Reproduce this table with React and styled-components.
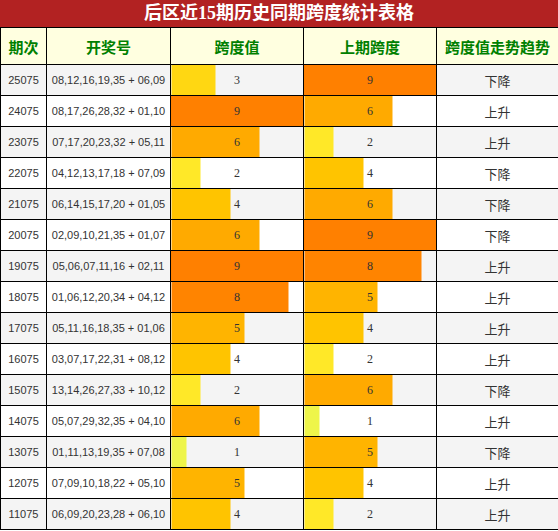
import styled, { createGlobalStyle } from "styled-components";

const GlobalStyle = createGlobalStyle`
  body {
    margin: 0;
    background: #fff;
  }
`;

const rows = [
  ["25075", "08,12,16,19,35 + 06,09", 3, 9, "下降"],
  ["24075", "08,17,26,28,32 + 01,10", 9, 6, "上升"],
  ["23075", "07,17,20,23,32 + 05,11", 6, 2, "上升"],
  ["22075", "04,12,13,17,18 + 07,09", 2, 4, "下降"],
  ["21075", "06,14,15,17,20 + 01,05", 4, 6, "下降"],
  ["20075", "02,09,10,21,35 + 01,07", 6, 9, "下降"],
  ["19075", "05,06,07,11,16 + 02,11", 9, 8, "上升"],
  ["18075", "01,06,12,20,34 + 04,12", 8, 5, "上升"],
  ["17075", "05,11,16,18,35 + 01,06", 5, 4, "上升"],
  ["16075", "03,07,17,22,31 + 08,12", 4, 2, "上升"],
  ["15075", "13,14,26,27,33 + 10,12", 2, 6, "下降"],
  ["14075", "05,07,29,32,35 + 04,10", 6, 1, "上升"],
  ["13075", "01,11,13,19,35 + 07,08", 1, 5, "下降"],
  ["12075", "07,09,10,18,22 + 05,10", 5, 4, "上升"],
  ["11075", "06,09,20,23,28 + 06,10", 4, 2, "上升"],
];

const barColors = {
  1: "#eef54a",
  2: "#ffe828",
  3: "#ffd712",
  4: "#ffc400",
  5: "#ffb400",
  6: "#ffaa00",
  7: "#ff9a00",
  8: "#ff8400",
  9: "#ff8000",
};

const Wrapper = styled.div`
  width: 558px;
`;

const Title = styled.div`
  height: 27px;
  background: #b22222;
  color: #fff;
  font-family: "Liberation Serif", "Noto Sans CJK SC", serif;
  font-weight: 700;
  font-size: 18px;
  line-height: 27px;
  text-align: center;
  border-bottom: 1px solid #000;
  box-sizing: border-box;
  height: 28px;
`;

const Table = styled.table`
  width: 558px;
  border-collapse: collapse;
  table-layout: fixed;
`;

const HeadCell = styled.th`
  height: 36px;
  padding: 0;
  border: 1px solid #000;
  border-top: none;
  background: #ffffe0;
  color: #008000;
  font-family: "Noto Sans CJK SC", sans-serif;
  font-weight: 700;
  font-size: 15px;
  text-align: center;
`;

const Row = styled.tr`
  background: ${(p) => (p.$even ? "#f4f4f4" : "#fff")};
`;

const Cell = styled.td`
  height: 30px;
  padding: 0;
  border: 1px solid #000;
  text-align: center;
  color: #333;
  font-family: "Liberation Sans", "Noto Sans CJK SC", sans-serif;
  font-size: 11px;
`;

const TrendCell = styled(Cell)`
  font-family: "Noto Sans CJK SC", sans-serif;
  font-size: 13px;
`;

const BarCell = styled(Cell)`
  font-family: "Liberation Serif", serif;
  font-size: 12px;
  background: ${(p) =>
    `linear-gradient(to right, ${barColors[p.$value]} ${(p.$value / 9) * 100}%, transparent ${(p.$value / 9) * 100}%)`};
`;

export default function App() {
  return (
    <Wrapper>
      <GlobalStyle />
      <Title>后区近15期历史同期跨度统计表格</Title>
      <Table>
        <colgroup>
          <col style={{ width: 46 }} />
          <col style={{ width: 124 }} />
          <col style={{ width: 133 }} />
          <col style={{ width: 133 }} />
          <col style={{ width: 122 }} />
        </colgroup>
        <thead>
          <tr>
            <HeadCell>期次</HeadCell>
            <HeadCell>开奖号</HeadCell>
            <HeadCell>跨度值</HeadCell>
            <HeadCell>上期跨度</HeadCell>
            <HeadCell>跨度值走势趋势</HeadCell>
          </tr>
        </thead>
        <tbody>
          {rows.map(([issue, nums, span, prev, trend], i) => (
            <Row key={issue} $even={i % 2 === 0}>
              <Cell>{issue}</Cell>
              <Cell>{nums}</Cell>
              <BarCell $value={span}>{span}</BarCell>
              <BarCell $value={prev}>{prev}</BarCell>
              <TrendCell>{trend}</TrendCell>
            </Row>
          ))}
        </tbody>
      </Table>
    </Wrapper>
  );
}
